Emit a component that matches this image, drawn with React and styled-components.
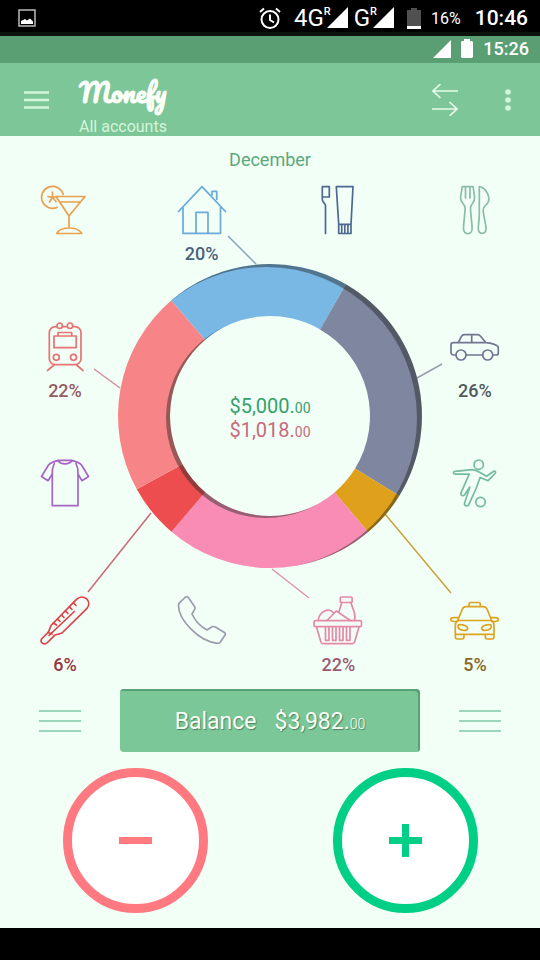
import React from "react";
import styled, { createGlobalStyle } from "styled-components";

const GlobalStyle = createGlobalStyle`
  * { box-sizing: border-box; }
  body { margin: 0; background: #000; font-family: Roboto, "Liberation Sans", sans-serif; }
  button { font: inherit; color: inherit; background: none; border: 0; padding: 0; cursor: pointer; }
  svg { display: block; }
`;

const Screen = styled.div`
  min-height: 100vh;
  display: flex;
  flex-direction: column;
  background: #f2fff7;
`;

const DeviceBar = styled.div`
  height: 36px;
  padding: 4px 12px 0 18px;
  display: flex;
  align-items: center;
  color: #fff;
  background: #000;
  border-bottom: 4px solid #0a140d;
`;

const DeviceGroup = styled.div`
  margin-left: auto;
  display: flex;
  align-items: center;
`;

const Network = styled.span`
  display: flex;
  align-items: flex-start;
  margin-left: ${(p) => p.$gap}px;
  font-size: 24px;
  line-height: 23px;
`;

const Roaming = styled.sup`
  margin-right: -4px;
  font-size: 11px;
  font-weight: 500;
  line-height: 10px;
`;

const DeviceBattery = styled.svg`
  margin-left: 13px;
`;

const BatteryLevel = styled.span`
  margin: 0 14px 0 10px;
  font-size: 16px;
`;

const Clock = styled.span`
  font-size: ${(p) => (p.$large ? 21 : 18)}px;
  font-weight: 500;
`;

const AppStatusBar = styled.div`
  height: 27px;
  padding: 0 11px 2px 0;
  display: flex;
  align-items: center;
  justify-content: flex-end;
  gap: 10px;
  color: #fff;
  background: #5a9f73;
`;

const AppBar = styled.header`
  height: 73px;
  padding: 0 24px;
  display: flex;
  align-items: center;
  color: #d3f5d8;
  background: #7dc698;
`;

const Account = styled.div`
  flex: 1;
  align-self: flex-end;
  margin-left: 29px;
`;

const Wordmark = styled.h1`
  margin: 0 0 10px;
  color: #fbfff8;
  font-family: Pacifico, "Liberation Serif", cursive;
  font-size: 26px;
  font-weight: 700;
  line-height: 32px;
`;

const AccountName = styled.p`
  margin: 0;
  font-size: 16px;
  line-height: 18px;
`;

const IconButton = styled.button`
  margin-right: ${(p) => p.$gap || 0}px;
`;

const Main = styled.main`
  flex: 1;
  display: flex;
  flex-direction: column;
`;

const Period = styled.h2`
  margin: 13px 0 14px;
  color: #5aa97b;
  font-size: 18px;
  font-weight: 400;
  line-height: 22px;
  text-align: center;
`;

const Overview = styled.section`
  display: grid;
  grid-template-columns: repeat(4, 60px);
  grid-auto-rows: 82px;
  row-gap: 55px;
  justify-content: space-between;
  padding: 0 35px;
  position: relative;
`;

const ChartLayer = styled.div`
  position: absolute;
  top: 0;
  left: 0;
  right: 0;
  display: grid;
  place-items: center;
  pointer-events: none;

  > * { grid-area: 1 / 1; }
`;

const Category = styled.button`
  grid-area: ${(p) => p.$row} / ${(p) => p.$col};
  display: flex;
  flex-direction: column;
  align-items: center;
  gap: 7px;
  color: ${(p) => p.$color};
`;

const Share = styled.span`
  color: ${(p) => p.$color};
  font-size: 18px;
  font-weight: 500;
  line-height: 24px;
`;

const Totals = styled.div`
  padding-top: 3px;
  text-align: center;
  font-size: 20px;
  -webkit-text-stroke: 0;
`;

const Amount = styled.div`
  height: 24px;
  line-height: 24px;
  color: ${(p) => p.$color};
`;

const Cents = styled.small`
  font-size: 14px;
  font-weight: ${(p) => (p.$light ? 300 : 400)};
  line-height: 1;
`;

const BalanceRow = styled.section`
  display: grid;
  grid-template-columns: 1fr 300px 1fr;
  place-items: center;
  margin-top: 11px;
  color: #9cd6bb;
`;

const BalanceButton = styled.button`
  width: 100%;
  height: 63px;
  padding-top: 2px;
  display: flex;
  align-items: center;
  justify-content: center;
  gap: 18px;
  border-radius: 4px;
  color: #f8fff4;
  background: #7bc797;
  box-shadow: inset -2px 2px 0 #57a175;
  font-size: 23px;
  text-shadow: 1px 1px 1px #4b8362;
`;

const Actions = styled.section`
  display: grid;
  grid-template-columns: 1fr 1fr;
  justify-items: center;
  padding: 16px 0 15px;
`;

const RoundButton = styled.button`
  width: 145px;
  height: 145px;
  display: grid;
  place-items: center;
  border: 9px solid currentColor;
  border-radius: 50%;
  color: ${(p) => p.$color};
  background: #fff;
`;

const NavigationStrip = styled.footer`
  height: 32px;
  background: #000;
`;

const drawings = {
  cocktail: (
    <>
      <path d="M17 22.4A11 11 0 1 1 23.2 9.500M12.500 7v5.500M12.500 12.500l-3 4.500M12.500 12.500l3.500 4M8 11.500l4.500 1 4.500-1" />
      <path d="M16 11.500h29L29 31zM20.500 17h20M29 31v12M16.700 48.500h25c-2-3.500-7-5.500-12.500-5.500s-10.500 2-12.500 5.500z" />
    </>
  ),
  house: (
    <>
      <path d="M1.500 26.500 25 1.700l23.500 24.800M6 22v26.300h37.500V22M19 48V27.300h12V48" />
      <path d="M35 10V6.300h4.700v8" />
    </>
  ),
  hygiene: (
    <>
      <path d="M12.500 48.500V20.500c0-2.500-3.200-3-3.200-6V1.700h7V12h-6.500" />
      <path d="M23.300 1.700H40l-2 37.600H25.700zM25.700 39.300h12.300v9.200H25.700zM28.700 39.500v9M31.800 39.500v9M34.900 39.500v9" />
    </>
  ),
  cutlery: (
    <>
      <path d="M12.300 1.700h10.800l1.500 10.500c.5 5.800-4.100 6.300-4.100 10.800 0 6 1.600 15 1.600 20.500 0 7-8.600 7-8.600 0 0-5.500 1.600-14.500 1.600-20.500 0-4.500-5-5-4.500-10.800zM15.500 2v11M20 2v11" />
      <path d="M29.300 1.700c6.500 1 11.500 10 8.700 15.800-1.500 3-4.800 3.500-4.800 7.500 0 5.500 2.800 14 2.800 18.500 0 6.500-7.700 6.500-7.700 0 0-5 1.500-12 1-20z" />
    </>
  ),
  train: (
    <>
      <path d="M17 4.700h-1.700a6 6 0 0 0-6 6v26a6 6 0 0 0 6 6H35a6 6 0 0 0 6-6v-26a6 6 0 0 0-6-6h-2M22.500 4.700h4.700" />
      <circle cx="19.700" cy="3.700" r="2.700" /><circle cx="30" cy="3.700" r="2.700" />
      <path d="M18 14v-3.500h13.700V14M14 14h22.200v11.700H14zM14 43l-6.500 5.500M36.500 43l6.500 5.500" />
      <circle cx="16.300" cy="35.300" r="3" /><circle cx="33.500" cy="35.300" r="3" />
    </>
  ),
  shirt: (
    <>
      <path d="M12.300 15 8 21.700l-6.500-4.200L8.500 6C11 3 15 2 19.300 1.300h11.500C35 2 39 3 41.500 6l7 11.500-6.500 4.200-4-6.700v31.700H12.300zM12.300 15c-.3-4 .3-7 2-10.500M38 15c.3-4-.3-7-2-10.500" />
      <path d="M18 1.500c3 4.500 11 4.500 14 0" />
    </>
  ),
  car: (
    <>
      <path d="M6 33H3.500A2.500 2.500 0 0 1 1 30.500V23c0-1.500 1-2.300 2.500-2.300h4.800l3-6c.8-1.400 1.500-2 3-2h13c1.500 0 2.300.5 3.300 1.600l5.400 6.400c4 .3 12.300 1.800 12.300 5V31c0 1.300-.7 2-2 2h-3.500M16 33h16.500M8.300 20.700h27.500M21.700 12.700v8" />
      <circle cx="11" cy="33" r="5" /><circle cx="37.700" cy="33" r="5" />
    </>
  ),
  football: (
    <>
      <circle cx="28.700" cy="5.700" r="4.700" /><circle cx="30.500" cy="43" r="4.700" />
      <path d="M5 12.300 22 10.600c3.500.2 6 1.400 8.500 3.200l6 3.400 7.300-4.900c1.500-.6 2.300.9 1.300 2.200l-7 7.200-8-3.200-4 11-7.200 15.900c-1.200 2.700-5 1.700-4.300-1.400l5.200-16-5.400 8c-1.300 1.500-4.100.5-3.500-1.800l8.300-19.100-14 .1c-2.400-.3-2.300-2.600-.2-2.900z" />
    </>
  ),
  health: (
    <>
      <path d="M2 42.500 8.500 36 11 29.500 36.500 3.300c7-6.500 16 2 10.500 9L22 37l-7.500 2.300-7 7.200c-3.500 3.500-8.500-.5-5.500-4z" />
      <path d="M34.300 15.500 9 39.500M8 36.500l4 1.500M13.500 27l3 2M17.500 23l2.500 2.500M21.500 19l2.500 2.500M25.500 15l2.500 2.500M29.500 11l2.500 2.500M33.500 7l2.500 2.500" />
    </>
  ),
  phone: (
    <path d="M8 1.500c1.200-1 2.500-1 3.500.2l6 8.800c.8 1.200.8 2-.1 3.400L15 18c3 6.500 8.500 12.500 15 16l5-3.200c1.200-.5 2.300-.4 3.400.2l9 5.500c1 .8 1.200 1.700.5 2.800l-4.300 6.500c-.9 1.200-1.800 1.600-3.300 1.500C22 45.500 1.500 24 1.500 9.500c0-1.200.4-2 1.200-2.800z" />
  ),
  groceries: (
    <>
      <rect x="1" y="24.700" width="47.500" height="6" rx="1.500" />
      <path d="M3.500 31 8 46.200c.4 1 1 1.500 2 1.500h29.500c1 0 1.600-.5 2-1.500L46 31M12.500 31v13.300H16V31M19.500 31v13.300H23V31M26.500 31v13.300H30V31M33.500 31v13.300H37V31" />
      <rect x="27.300" y="1" width="11.800" height="5.500" rx="1" />
      <path d="m28.800 6.400-2.800 9.400M37.800 6.400 41.500 17c.5 2.500.5 5 0 7.700M5.300 24.300C6 15.500 15.500 11.500 20.300 16.500M14 24.500l9.300-9.500 14.500 9.700" />
    </>
  ),
  taxi: (
    <>
      <path d="M19 10.500V8c0-1 .6-1.500 1.500-1.500h8.300c.9 0 1.500.5 1.500 1.500v2.500M7.700 24.500l4.500-11c.8-2 2-2.800 4-2.800h17c2 0 3.200.8 4 2.800l4.500 11z" />
      <path d="M7.500 24.700C6 26 5.300 28 5.300 30v8.300H44V30c0-2-.7-4-2.200-5.300M7.700 25.500H4c-4.500 0-4-3.800 0-3.800h4.500M41.500 25.500h3.800c4.500 0 4-3.800 0-3.800h-4.500M5.300 38.300v2.500c0 1.500.8 2.200 2.200 2.200H12c1.400 0 2-.7 2-2.200v-2.500M35.300 38.300v2.500c0 1.500.7 2.200 2 2.200H42c1.300 0 2-.7 2-2.200v-2.500" />
      <path d="M8 30c0-3 9.500-1 9.700 2.500.1 3-9.700 2.500-9.700-2.500zM41.300 30c0-3-9.500-1-9.700 2.500-.1 3 9.700 2.500 9.700-2.500z" />
    </>
  ),
};

const categories = [
  { id: "cocktail", label: "Bar", row: 1, col: 1, color: "#e8a04e" },
  { id: "house", label: "House", row: 1, col: 2, color: "#6aaad8", share: "20%", shareColor: "#4c617a" },
  { id: "hygiene", label: "Toiletry", row: 1, col: 3, color: "#4e6893" },
  { id: "cutlery", label: "Eating out", row: 1, col: 4, color: "#8abda5" },
  { id: "train", label: "Transport", row: 2, col: 1, color: "#e67474", share: "22%", shareColor: "#925c64" },
  { id: "car", label: "Car", row: 2, col: 4, color: "#717593", share: "26%", shareColor: "#515a5c" },
  { id: "shirt", label: "Clothes", row: 3, col: 1, color: "#a565c4" },
  { id: "football", label: "Sports", row: 3, col: 4, color: "#75bb9e" },
  { id: "health", label: "Health", row: 4, col: 1, color: "#dc4248", share: "6%", shareColor: "#963844" },
  { id: "phone", label: "Communications", row: 4, col: 2, color: "#9c9cad" },
  { id: "groceries", label: "Food", row: 4, col: 3, color: "#e688a7", share: "22%", shareColor: "#985b72" },
  { id: "taxi", label: "Taxi", row: 4, col: 4, color: "#dba31f", share: "5%", shareColor: "#876725" },
];

const slices = [
  { from: -40.5, to: 30, color: "#79b7e5" },
  { from: 30, to: 121.7, color: "#7e86a0" },
  { from: 121.7, to: 139.8, color: "#dfa01b" },
  { from: 139.8, to: 220.4, color: "#f88cb5" },
  { from: 220.4, to: 241.2, color: "#ee4d50" },
  { from: 241.2, to: 319.5, color: "#f78487" },
];

const leaders = [
  { d: "M228 51 256 79", color: "#88a5bf" },
  { d: "M94 184 120 203", color: "#d58d98" },
  { d: "M442 179 417 193", color: "#9a9ea8" },
  { d: "M88 407 151 328", color: "#cb6874" },
  { d: "M272 384 309 413", color: "#dc93ad" },
  { d: "M385 329 451 408", color: "#c9a33a" },
];

const CX = 270;
const CY = 231;
const OUTER = 152;
const INNER = 100;

function point(radius, degrees) {
  const a = (degrees * Math.PI) / 180;
  return `${(CX + radius * Math.sin(a)).toFixed(2)} ${(CY - radius * Math.cos(a)).toFixed(2)}`;
}

function slicePath({ from, to }) {
  return `M${point(OUTER, from)}A${OUTER} ${OUTER} 0 0 1 ${point(OUTER, to)}L${point(INNER, to)}A${INNER} ${INNER} 0 0 0 ${point(INNER, from)}Z`;
}

function circlePath(cx, cy, r) {
  return `M${cx - r} ${cy}a${r} ${r} 0 1 0 ${2 * r} 0a${r} ${r} 0 1 0 ${-2 * r} 0z`;
}

function SpendingChart() {
  return (
    <svg width="540" height="462" viewBox="0 0 540 462" role="img" aria-label="Spending by category">
      <defs>
        <clipPath id="ring">
          <path clipRule="evenodd" d={circlePath(CX, CY, OUTER) + circlePath(CX, CY, INNER)} />
        </clipPath>
      </defs>
      {leaders.map((l) => <path key={l.d} d={l.d} stroke={l.color} strokeWidth="1.500" />)}
      {slices.map((s) => <path key={s.from} d={slicePath(s)} fill={s.color} />)}
      <g clipPath="url(#ring)" fill="#20251f" fillOpacity=".45">
        <path fillRule="evenodd" d={circlePath(CX, CY, 160) + circlePath(266, 233, 151)} />
        <path d={circlePath(266, 233, 100)} />
      </g>
    </svg>
  );
}

function CategoryIcon({ name }) {
  return (
    <svg width="50" height="50" viewBox="0 0 50 50" fill="none" stroke="currentColor" strokeWidth="1.700" strokeLinejoin="round" strokeLinecap="round" aria-hidden="true">
      {drawings[name]}
    </svg>
  );
}

function Signal({ size }) {
  return <svg width={size} height={size} viewBox="0 0 20 20" fill="currentColor"><path d="M20 0v20H0z" /></svg>;
}

function ListLines() {
  return (
    <svg width="42" height="24" viewBox="0 0 42 24" stroke="currentColor" strokeWidth="2" aria-hidden="true">
      <path d="M0 2h42M0 12h42M0 22h42" />
    </svg>
  );
}

export default function App() {
  return (
    <Screen>
      <GlobalStyle />
      <DeviceBar>
        <svg width="18" height="18" viewBox="0 0 18 18" fill="none" stroke="#bbb" strokeWidth="1.500">
          <path d="M1 1h16v16H1z" />
          <path d="M3 15v-3l4-2 2 1.500 3-2 3 3V15z" fill="#fff" stroke="none" />
        </svg>
        <DeviceGroup>
          <svg width="22" height="22" viewBox="0 0 22 22" fill="none" stroke="currentColor" strokeWidth="2">
            <circle cx="11" cy="12.500" r="8.500" />
            <path d="M11 7.500V13l4 2.500M1 5l4-3.500M21 5l-4-3.500" />
          </svg>
          <Network $gap={13}>4G<Roaming>R</Roaming><Signal size={21} /></Network>
          <Network $gap={6}>G<Roaming>R</Roaming><Signal size={21} /></Network>
          <DeviceBattery width="14" height="21" viewBox="0 0 14 21">
            <path d="M4 0h6v2h4v19H0V2h4z" fill="#505050" />
            <path d="M0 18h14v3H0z" fill="#fff" />
          </DeviceBattery>
          <BatteryLevel>16%</BatteryLevel>
          <Clock $large>10:46</Clock>
        </DeviceGroup>
      </DeviceBar>
      <AppStatusBar>
        <Signal size={18} />
        <svg width="12" height="19" viewBox="0 0 12 19" fill="currentColor"><path d="M3 0h6v2h2l1 1v15l-1 1H1l-1-1V3l1-1h2z" /></svg>
        <Clock>15:26</Clock>
      </AppStatusBar>
      <AppBar>
        <IconButton aria-label="Open menu">
          <svg width="26" height="20" viewBox="0 0 26 20" stroke="currentColor" strokeWidth="2.500"><path d="M0 2.500h25M0 10h25M0 17.500h25" /></svg>
        </IconButton>
        <Account>
          <Wordmark>Monefy</Wordmark>
          <AccountName>All accounts</AccountName>
        </Account>
        <IconButton aria-label="Transfer" $gap={46}>
          <svg width="26" height="32" viewBox="0 0 26 32" fill="none" stroke="#eafde8" strokeWidth="1.700"><path d="M26 7H1M8.500 0 1 7l7.500 7M0 25h25M17.500 18l7.500 7-7.500 7" /></svg>
        </IconButton>
        <IconButton aria-label="More options" $gap={4}>
          <svg width="8" height="24" viewBox="0 0 8 24" fill="currentColor"><circle cx="4" cy="4" r="2.800" /><circle cx="4" cy="12" r="2.800" /><circle cx="4" cy="20" r="2.800" /></svg>
        </IconButton>
      </AppBar>
      <Main>
        <Period>December</Period>
        <Overview>
          <ChartLayer>
            <SpendingChart />
            <Totals>
              <Amount $color="#35a06c">$5,000.<Cents>00</Cents></Amount>
              <Amount $color="#c8697a">$1,018.<Cents>00</Cents></Amount>
            </Totals>
          </ChartLayer>
          {categories.map((c) => (
            <Category key={c.id} aria-label={c.label} $row={c.row} $col={c.col} $color={c.color}>
              <CategoryIcon name={c.id} />
              {c.share && <Share $color={c.shareColor}>{c.share}</Share>}
            </Category>
          ))}
        </Overview>
        <BalanceRow>
          <IconButton aria-label="Show records"><ListLines /></IconButton>
          <BalanceButton>
            <span>Balance</span>
            <span>$3,982.<Cents $light>00</Cents></span>
          </BalanceButton>
          <IconButton aria-label="Show records by category"><ListLines /></IconButton>
        </BalanceRow>
        <Actions>
          <RoundButton aria-label="Add expense" $color="#ff7980">
            <svg width="33" height="33" viewBox="0 0 33 33" fill="currentColor"><path d="M0 13h33v7H0z" /></svg>
          </RoundButton>
          <RoundButton aria-label="Add income" $color="#02cf86">
            <svg width="33" height="33" viewBox="0 0 33 33" fill="currentColor"><path d="M13 0h7v13h13v7H20v13h-7V20H0v-7h13z" /></svg>
          </RoundButton>
        </Actions>
      </Main>
      <NavigationStrip />
    </Screen>
  );
}
